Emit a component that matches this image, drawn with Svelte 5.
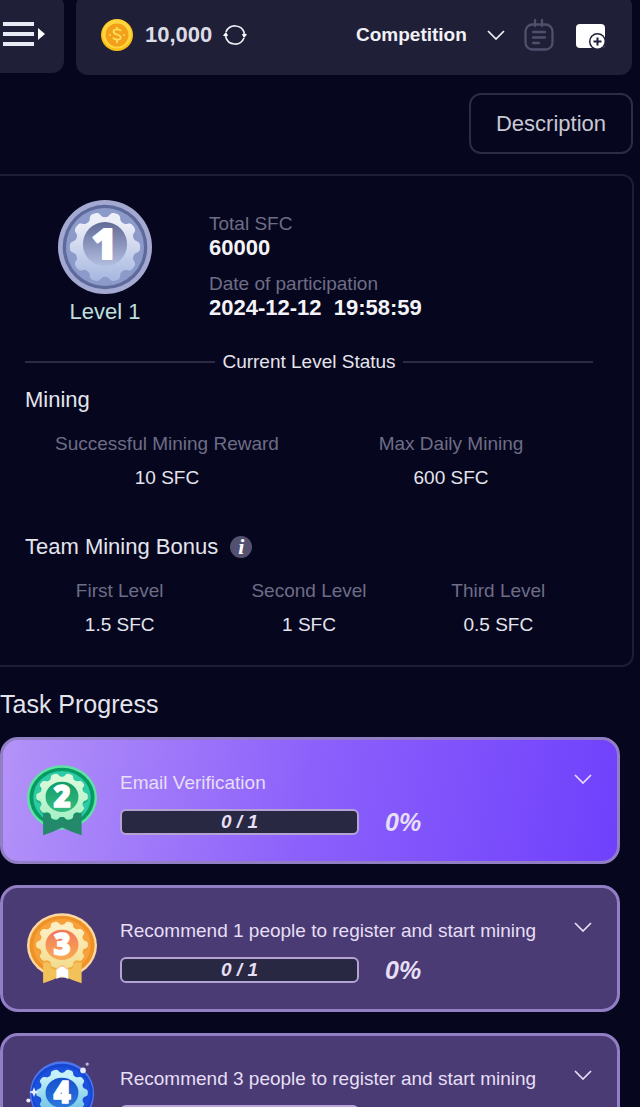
<script lang="ts">
    type Task = { level: number; title: string; done: number; total: number; active?: boolean };

    const tasks: Task[] = [
        { level: 2, title: "Email Verification", done: 0, total: 1, active: true },
        { level: 3, title: "Recommend 1 people to register and start mining", done: 0, total: 1 },
        { level: 4, title: "Recommend 3 people to register and start mining", done: 0, total: 3 },
    ];

    const mining = [
        { label: "Successful Mining Reward", value: "10 SFC" },
        { label: "Max Daily Mining", value: "600 SFC" },
    ];

    const bonus = [
        { label: "First Level", value: "1.5 SFC" },
        { label: "Second Level", value: "1 SFC" },
        { label: "Third Level", value: "0.5 SFC" },
    ];

    const palettes: Record<number, Record<string, string>> = {
        1: { rim: "#a3a9d0", ring: "#5f6a9c", disc: "#8c9aca", gearA: "#eceef8", gearB: "#a5b6df", coreA: "#626a96", coreB: "#b3bfe0" },
        2: { rim: "#5fe3a4", ring: "#079a62", disc: "#2bcba6", gearA: "#d9f9d9", gearB: "#a5efc6", coreA: "#109c68", coreB: "#35bd7f", ribbon: "#23896a" },
        3: { rim: "#fbd9a0", ring: "#ee9126", disc: "#f7a13a", gearA: "#fcefc3", gearB: "#f3dc8c", coreA: "#f2785a", coreB: "#f9ab55", ribbon: "#f3c159" },
        4: { rim: "#4d75ec", ring: "#1646d2", disc: "#1a52df", gearA: "#c5f1f8", gearB: "#62bde3", coreA: "#1650ce", coreB: "#2c79dc", ribbon: "#2352c6" },
    };

    let open = $state<number | null>(null);

    // ten rounded teeth, with a notch at twelve o'clock
    function gear(r: number, depth: number) {
        const points: string[] = [];
        for (let i = 0; i < 200; i++) {
            const a = (i / 200) * Math.PI * 2;
            const d = r - depth * Math.tanh(1.8 * Math.cos(a * 10) - 0.3);
            points.push(`${(50 + d * Math.sin(a)).toFixed(2)},${(50 - d * Math.cos(a)).toFixed(2)}`);
        }
        return points.join(" ");
    }
</script>

{#snippet chevron()}
    <svg class="chevron" viewBox="0 0 18 10" aria-hidden="true">
        <path d="M1 1l8 8 8-8" fill="none" stroke="currentColor" stroke-width="1.7" />
    </svg>
{/snippet}

{#snippet medal(level: number)}
    {@const p = palettes[level]}
    <svg class="medal" viewBox="0 0 100 100" aria-hidden="true">
        <defs>
            <linearGradient id="gear{level}" x1="0" y1="0" x2="0" y2="1">
                <stop offset="0.15" stop-color={p.gearA} />
                <stop offset="1" stop-color={p.gearB} />
            </linearGradient>
            <linearGradient id="core{level}" x1="0" y1="0" x2="0" y2="1">
                <stop offset="0" stop-color={p.coreA} />
                <stop offset="1" stop-color={p.coreB} />
            </linearGradient>
        </defs>
        {#if level === 1}
            <circle cx="50" cy="50" r="50" fill={p.rim} />
            <circle cx="50" cy="50" r="45" fill={p.ring} />
            <circle cx="50" cy="50" r="41.5" fill={p.disc} />
            <polygon points={gear(34.5, 3)} fill="url(#gear1)" />
            <circle cx="50" cy="47" r="23.5" fill="url(#core1)" />
            <text x="49" y="63" font-size="46">1</text>
        {:else}
            <ellipse cx="50" cy="45" rx={level === 4 ? 46 : 50} ry="46" fill={p.rim} />
            <ellipse cx="50" cy="45" rx={level === 4 ? 44 : 46.5} ry="42.5" fill={p.ring} />
            <ellipse cx="50" cy="45" rx="41" ry="38" fill={p.disc} />
            <path d="M23 66h55v33l-14-5-14-6-13 6-14 5z" fill={p.ribbon} />
            {#if level === 3}
                <path d="M42 68h17v25l-9-4-8 4z" fill="#fff" />
            {/if}
            <g transform="translate(0 -2) scale(1 0.92)">
                <polygon points={gear(34, 3)} fill={p.ring} opacity="0.5" transform="translate(0 3)" />
                <polygon points={gear(34, 3)} fill="url(#gear{level})" />
                <circle cx="50" cy="50" r="23.5" fill="url(#core{level})" />
            </g>
            <text x="50" y="59" font-size="42">{level}</text>
            {#if level === 4}
                <g fill="#e8ebff">
                    <circle cx="80" cy="12" r="4" />
                    <circle cx="86" cy="3" r="2.4" opacity="0.7" />
                    <circle cx="2" cy="55" r="3" />
                    <path d="M10 36l2 5 5 2-5 2-2 5-2-5-5-2 5-2z" />
                </g>
            {/if}
        {/if}
    </svg>
{/snippet}

{#snippet stats(items: { label: string; value: string }[])}
    <dl class="stats">
        {#each items as item}
            <div>
                <dt>{item.label}</dt>
                <dd>{item.value}</dd>
            </div>
        {/each}
    </dl>
{/snippet}

<div class="page">
    <header>
        <button class="menu" aria-label="Menu">
            <svg width="42" height="24" viewBox="0 0 42 24" aria-hidden="true">
                <path d="M0 2h31M0 12h31M0 22h31" stroke="#e9eaf3" stroke-width="4" />
                <path d="M35 6l7 6-7 6z" fill="#fff" />
            </svg>
        </button>
        <div class="bar">
            <svg width="32" height="32" viewBox="0 0 32 32" aria-hidden="true">
                <circle cx="16" cy="16" r="16" fill="#fbbd14" />
                <circle cx="16" cy="15" r="14.5" fill="#ffd640" />
                <circle cx="16" cy="16" r="11.5" fill="#f2a01a" />
                <path d="M20 12c-1-2-7-2.5-7.500.5-.3 3.500 7.500 2.500 7.300 6-.3 3-6.500 2.700-7.800.2M16 8v3M16 21v3" fill="none" stroke="#ffdd5c" stroke-width="1.8" />
                <circle cx="9" cy="16" r="1" fill="#ffdd5c" />
                <circle cx="23" cy="16" r="1" fill="#ffdd5c" />
            </svg>
            <span class="balance">10,000</span>
            <button class="icon" aria-label="Refresh balance">
                <svg width="24" height="24" viewBox="0 0 24 24" aria-hidden="true">
                    <path d="M3 9A9.700 9.700 0 0 1 21.300 10M21 15A9.700 9.700 0 0 1 2.700 14" fill="none" stroke="#eeeef4" stroke-width="1.7" />
                    <path d="M3 9l2 3.500-2 1.500-3-1.500zM21 15l-2-3.500 2-1.500 3 1.500z" fill="#fff" />
                </svg>
            </button>
            <div class="picker">
                <select aria-label="Section">
                    <option>Competition</option>
                </select>
                {@render chevron()}
            </div>
            <button class="icon" aria-label="Notes">
                <svg width="30" height="32" viewBox="0 0 30 32" aria-hidden="true">
                    <g fill="none" stroke="#51506c" stroke-width="2.3" stroke-linecap="round">
                        <rect x="1.5" y="5.5" width="27" height="25" rx="7" />
                        <path d="M11 1v6M18 1v6M9 13h12M9 18.5h12M9 24h6" />
                    </g>
                </svg>
            </button>
            <button class="icon wallet" aria-label="Add to wallet">
                <svg width="30" height="28" viewBox="0 0 30 28" aria-hidden="true">
                    <rect x="0" y="3" width="29" height="24" rx="4" fill="#fff" />
                    <circle cx="21.5" cy="20.5" r="8.5" fill="#1f1f38" />
                    <circle cx="21.5" cy="20.5" r="7" fill="#fff" />
                    <path d="M21.5 16.5v8M17.5 20.5h8" stroke="#1f1f38" stroke-width="2" />
                </svg>
            </button>
        </div>
    </header>

    <button class="description">Description</button>

    <section class="panel">
        <div class="summary">
            <div class="level">
                {@render medal(1)}
                <span>Level 1</span>
            </div>
            <dl class="info">
                <dt>Total SFC</dt>
                <dd>60000</dd>
                <dt>Date of participation</dt>
                <dd>2024-12-12&nbsp; 19:58:59</dd>
            </dl>
        </div>

        <div class="divider">Current Level Status</div>

        <h3>Mining</h3>
        {@render stats(mining)}

        <h3 class="team">
            Team Mining Bonus
            <button class="tip" aria-label="About the team mining bonus">i</button>
        </h3>
        {@render stats(bonus)}
    </section>

    <h2>Task Progress</h2>

    <div class="tasks">
        {#each tasks as task}
            {@const percent = Math.round((task.done / task.total) * 100)}
            <article class="task" class:active={task.active}>
                {@render medal(task.level)}
                <div class="body">
                    <h4>{task.title}</h4>
                    <div class="progress">
                        <div
                            class="track"
                            role="progressbar"
                            aria-label={task.title}
                            aria-valuenow={task.done}
                            aria-valuemin="0"
                            aria-valuemax={task.total}
                        >
                            <div class="fill" style="width: {percent}%"></div>
                            <span>{task.done} / {task.total}</span>
                        </div>
                        <strong>{percent}%</strong>
                    </div>
                </div>
                <button
                    class="icon toggle"
                    class:open={open === task.level}
                    aria-label="Show details"
                    aria-expanded={open === task.level}
                    onclick={() => (open = open === task.level ? null : task.level)}
                >
                    {@render chevron()}
                </button>
            </article>
        {/each}
    </div>
</div>

<style>
    :global(body) {
        background: #06061f;
    }

    .page {
        height: 100vh;
        overflow: hidden auto;
        scrollbar-width: none;
        background: #06061f;
        color: #e4e4ec;
        font-family: "Liberation Sans", Arial, sans-serif;
        font-size: 19px;
        line-height: 24px;
    }

    button,
    select {
        font: inherit;
        color: inherit;
        border: none;
        background: none;
        padding: 0;
        cursor: pointer;
    }

    svg {
        display: block;
        flex: none;
    }

    h2,
    h3,
    h4,
    dl,
    dd {
        margin: 0;
        font-weight: 400;
    }

    header {
        display: flex;
        align-items: flex-start;
        gap: 12px;
        margin: -6px 8px 18px -16px;
    }

    .menu {
        width: 80px;
        height: 79px;
        padding-left: 19px;
        background: #1f1f38;
        border-radius: 12px;
    }

    .bar {
        flex: 1;
        display: flex;
        align-items: center;
        height: 81px;
        padding: 0 26px 0 25px;
        box-sizing: border-box;
        background: #1f1f38;
        border-radius: 12px;
    }

    .balance {
        margin: 0 11px 0 12px;
        font-size: 22px;
        font-weight: 700;
        color: #dcdce6;
    }

    .picker {
        position: relative;
        margin-left: auto;
        margin-right: 19px;
        color: #f1f1f6;
    }

    .picker select {
        appearance: none;
        padding-right: 38px;
        font-weight: 700;
    }

    .picker .chevron {
        position: absolute;
        right: 0;
        top: 7px;
        pointer-events: none;
    }

    .chevron {
        width: 18px;
        height: 10px;
    }

    .wallet {
        margin-left: 22px;
    }

    .description {
        display: block;
        margin: 0 7px 20px auto;
        padding: 0 25px;
        height: 61px;
        border: 2px solid #2d2c46;
        border-radius: 12px;
        font-size: 22px;
        color: #c9c9d3;
    }

    .panel {
        margin: 0 6px 0 -16px;
        padding: 24px 39px 28px;
        border: 2px solid #1d1d37;
        border-radius: 12px;
    }

    .summary {
        display: flex;
        gap: 56px;
    }

    .level {
        display: flex;
        flex-direction: column;
        align-items: center;
        gap: 6px;
        margin-left: 32px;
        font-size: 22px;
        color: #bfe0dc;
    }

    .level .medal {
        width: 96px;
        height: 94px;
    }

    .medal {
        overflow: visible;
    }

    .medal text {
        font-family: "Open Sans", sans-serif;
        font-weight: 800;
        text-anchor: middle;
        fill: #fff;
        stroke: #fff;
        stroke-width: 2;
        stroke-linejoin: round;
    }

    .info {
        padding-top: 12px;
    }

    dt {
        color: #6e6d86;
    }

    .info dd {
        font-size: 22px;
        font-weight: 700;
        color: #f4f4f8;
    }

    .info dd:not(:last-child) {
        margin-bottom: 12px;
    }

    .divider {
        display: flex;
        align-items: center;
        gap: 7px;
        margin: 26px 0 14px;
    }

    .divider::before,
    .divider::after {
        content: "";
        flex: 1;
        height: 2px;
        background: #2b2b43;
    }

    h3 {
        font-size: 22px;
    }

    .team {
        display: flex;
        align-items: center;
        gap: 12px;
        margin-top: 45px;
    }

    .tip {
        width: 22px;
        height: 22px;
        border-radius: 50%;
        background: #53516f;
        font: italic 700 22px/22px "Liberation Serif", serif;
        color: #fff;
    }

    .stats {
        display: grid;
        grid-auto-flow: column;
        grid-auto-columns: 1fr;
        margin-top: 20px;
        text-align: center;
    }

    .stats dd {
        margin-top: 10px;
    }

    h2 {
        margin: 22px 0 18px;
        font-size: 25px;
        line-height: 30px;
    }

    .tasks {
        display: flex;
        flex-direction: column;
        gap: 21px;
        margin-right: 20px;
    }

    .task {
        display: flex;
        align-items: flex-start;
        padding: 25px 22px 24px 24px;
        border: 3px solid #917ec4;
        border-radius: 18px;
        background: #4a3b74;
        color: #e6dff5;
    }

    .task.active {
        background: linear-gradient(100deg, #b493f8, #8b60fb 50%, #6f40fc) border-box;
    }

    .task .medal {
        width: 70px;
        height: 72px;
    }

    .body {
        flex: 1;
        padding: 6px 0 0 23px;
    }

    h4 {
        font-size: 19px;
    }

    .progress {
        display: flex;
        align-items: center;
        gap: 26px;
        margin-top: 14px;
        height: 26px;
        font-style: italic;
        font-weight: 700;
    }

    .track {
        position: relative;
        width: 53%;
        height: 26px;
        box-sizing: border-box;
        border: 2px solid #b6a3d6;
        border-radius: 6px;
        background: #292842;
        line-height: 22px;
        text-align: center;
        overflow: hidden;
    }

    .track span {
        position: relative;
    }

    .fill {
        position: absolute;
        inset: 0 auto 0 0;
        background: #8b60fb;
    }

    .progress strong {
        font-size: 25px;
    }

    .toggle {
        display: flex;
        align-items: center;
        justify-content: center;
        width: 24px;
        height: 24px;
        margin-top: 2px;
    }

    .toggle.open .chevron {
        transform: rotate(180deg);
    }
</style>
